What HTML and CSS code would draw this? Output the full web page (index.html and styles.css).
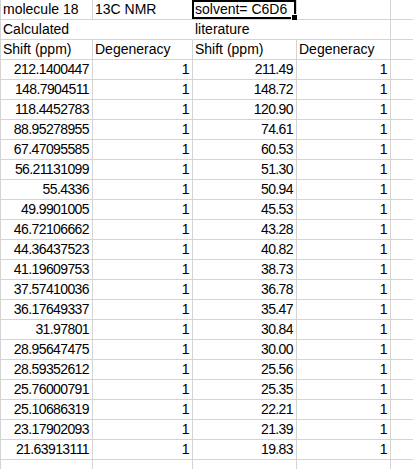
FILE: index.html
```html
<!DOCTYPE html>
<html>
<head>
<meta charset="utf-8">
<link rel="stylesheet" href="styles.css">
</head>
<body>
<div class="sheet">
  <div class="c">molecule 18</div><div class="c">13C NMR</div><div class="c sel">solvent= C6D6<span class="selbox"><span class="handle"></span></span></div><div class="c"></div><div class="c"></div>
  <div class="c span2">Calculated</div><div class="c span2">literature</div><div class="c"></div>
  <div class="c">Shift (ppm)</div><div class="c">Degeneracy</div><div class="c">Shift (ppm)</div><div class="c">Degeneracy</div><div class="c"></div>
  <div class="c n">212.1400447</div><div class="c n">1</div><div class="c n">211.49</div><div class="c n">1</div><div class="c"></div>
  <div class="c n">148.7904511</div><div class="c n">1</div><div class="c n">148.72</div><div class="c n">1</div><div class="c"></div>
  <div class="c n">118.4452783</div><div class="c n">1</div><div class="c n">120.90</div><div class="c n">1</div><div class="c"></div>
  <div class="c n">88.95278955</div><div class="c n">1</div><div class="c n">74.61</div><div class="c n">1</div><div class="c"></div>
  <div class="c n">67.47095585</div><div class="c n">1</div><div class="c n">60.53</div><div class="c n">1</div><div class="c"></div>
  <div class="c n">56.21131099</div><div class="c n">1</div><div class="c n">51.30</div><div class="c n">1</div><div class="c"></div>
  <div class="c n">55.4336</div><div class="c n">1</div><div class="c n">50.94</div><div class="c n">1</div><div class="c"></div>
  <div class="c n">49.9901005</div><div class="c n">1</div><div class="c n">45.53</div><div class="c n">1</div><div class="c"></div>
  <div class="c n">46.72106662</div><div class="c n">1</div><div class="c n">43.28</div><div class="c n">1</div><div class="c"></div>
  <div class="c n">44.36437523</div><div class="c n">1</div><div class="c n">40.82</div><div class="c n">1</div><div class="c"></div>
  <div class="c n">41.19609753</div><div class="c n">1</div><div class="c n">38.73</div><div class="c n">1</div><div class="c"></div>
  <div class="c n">37.57410036</div><div class="c n">1</div><div class="c n">36.78</div><div class="c n">1</div><div class="c"></div>
  <div class="c n">36.17649337</div><div class="c n">1</div><div class="c n">35.47</div><div class="c n">1</div><div class="c"></div>
  <div class="c n">31.97801</div><div class="c n">1</div><div class="c n">30.84</div><div class="c n">1</div><div class="c"></div>
  <div class="c n">28.95647475</div><div class="c n">1</div><div class="c n">30.00</div><div class="c n">1</div><div class="c"></div>
  <div class="c n">28.59352612</div><div class="c n">1</div><div class="c n">25.56</div><div class="c n">1</div><div class="c"></div>
  <div class="c n">25.76000791</div><div class="c n">1</div><div class="c n">25.35</div><div class="c n">1</div><div class="c"></div>
  <div class="c n">25.10686319</div><div class="c n">1</div><div class="c n">22.21</div><div class="c n">1</div><div class="c"></div>
  <div class="c n">23.17902093</div><div class="c n">1</div><div class="c n">21.39</div><div class="c n">1</div><div class="c"></div>
  <div class="c n">21.63913111</div><div class="c n">1</div><div class="c n">19.83</div><div class="c n">1</div><div class="c"></div>
  <div class="c"></div><div class="c"></div><div class="c"></div><div class="c"></div><div class="c"></div>
</div>
</body>
</html>
```
FILE: styles.css
```css
html, body {
  margin: 0;
  padding: 0;
  background: #fff;
}
body {
  width: 413px;
  height: 469px;
  overflow: hidden;
}
.sheet {
  display: grid;
  grid-template-columns: 92px 100px 104px 94px 40px;
  grid-auto-rows: 20px;
  border-left: 1px solid #d4d4d4;
  font-family: "Liberation Sans", Arial, sans-serif;
  font-size: 14px;
  line-height: 19px;
  color: #000;
}
.c {
  box-sizing: border-box;
  border-right: 1px solid #d4d4d4;
  border-bottom: 1px solid #d4d4d4;
  padding: 0 2px 0 2px;
  white-space: nowrap;
  overflow: visible;
  position: relative;
}
.span2 {
  grid-column: span 2;
  border-right-color: transparent;
}
.span2 + .span2 {
  border-right-color: #d4d4d4;
}
.n {
  text-align: right;
  letter-spacing: -0.6px;
  padding-right: 3px;
}
.sel {
  padding-left: 2px;
}
.selbox {
  position: absolute;
  left: -1px;
  top: 0;
  right: 0;
  bottom: 0;
  border: 2px solid #000;
}
.handle {
  position: absolute;
  right: -4px;
  bottom: -4px;
  width: 5px;
  height: 5px;
  background: #000;
  border: 1px solid #fff;
}
```
